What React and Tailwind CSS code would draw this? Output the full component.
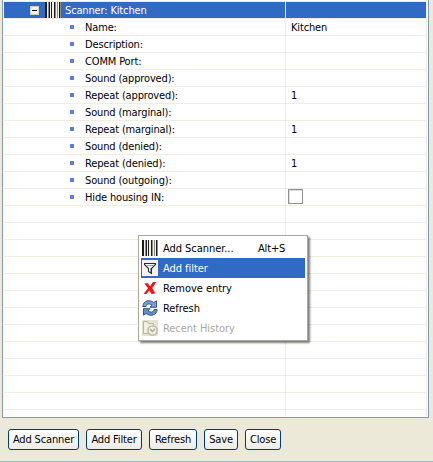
import React from "react";

const rows = [
  ["Name:", "Kitchen"],
  ["Description:", ""],
  ["COMM Port:", ""],
  ["Sound (approved):", ""],
  ["Repeat (approved):", "1"],
  ["Sound (marginal):", ""],
  ["Repeat (marginal):", "1"],
  ["Sound (denied):", ""],
  ["Repeat (denied):", "1"],
  ["Sound (outgoing):", ""],
  ["Hide housing IN:", "checkbox"],
];
const blanks = Array.from({ length: 12 }, (_, i) => i);

function Barcode() {
  return (
    <svg className="h-4 w-4 shrink-0" viewBox="0 0 16 16" shapeRendering="crispEdges">
      <path fill="#f4f1e6" d="M0 0h16v16H0z" />
      <path fill="#1c1c1c" d="M0 0h2v16H0zM4 0h1v16H4zM6 0h1v16H6zM9 0h1v16H9zM14 0h1v16h-1z" />
      <path fill="#8c8c86" d="M3 0h1v16H3zM10 0h1v16h-1zM12 0h1v16h-1zM15 0h1v16h-1z" />
    </svg>
  );
}

function Funnel() {
  return (
    <svg className="h-4 w-4 shrink-0" viewBox="0 0 16 16">
      <path fill="#f6f4ec" d="M0 0h16v16H0z" />
      <path fill="#fff" stroke="#222b3c" strokeWidth="1.1" d="M2.500 3.500h11v1L9.500 8.500v5l-3-2v-3l-4-4z" />
      <path fill="#8ba0b8" d="M8 8h1v4H8zM5 5h6v1H5z" />
    </svg>
  );
}

function Cross() {
  return (
    <svg className="h-4 w-4 shrink-0" viewBox="0 0 16 16">
      <path fill="#f01414" d="M2.500 3.500L5.500 3 8 6.300 11 2h3L9.800 8l3 5.500-3.300.5L7.400 10.300 4.500 14H1.500L6 8.200z" />
      <path fill="none" stroke="#c00808" strokeWidth=".8" d="M13.500 2.200L9.800 8l3 5.300" />
    </svg>
  );
}

function RefreshIcon() {
  return (
    <svg className="h-4 w-4 shrink-0" viewBox="0 0 16 16">
      <path fill="#7ba0cf" stroke="#234a86" strokeWidth=".9" d="M.8 6.500C1 .5 8-.8 11.800 2.500L14.500.8v6.500H8l2-2.200C7.500 3.300 4.800 3.500 4 6.500z" />
      <path fill="#6890c8" stroke="#234a86" strokeWidth=".9" d="M15.200 9.500C15 15.500 8 16.800 4.200 13.500L1.500 15.200V8.700H8l-2 2.200c2.500 1.800 5.200 1.600 6-1.400z" />
    </svg>
  );
}

function HistoryIcon() {
  return (
    <svg className="h-4 w-4 shrink-0" viewBox="0 0 16 16" fill="none" stroke="#b9b5a4">
      <path fill="#e6e2d0" stroke="none" d="M0 0h16v16H0z" />
      <path fill="#f1eee2" d="M1.500 1.500h4l1 2h5v10h-10z" />
      <circle cx="10.500" cy="10.500" r="4.600" fill="#f1eee2" strokeWidth="1.400" />
      <path stroke="#aca899" strokeWidth="1.400" d="M8 9l2.500 2.500L13 9" />
    </svg>
  );
}

function MenuItem({ icon, label, hint, active, disabled }) {
  return (
    <div className={"flex h-5 items-center pl-px " + (active ? "bg-[#316ac5] text-white" : disabled ? "text-[#aca899]" : "text-black")}>
      {icon}
      <span className="ml-[5px] w-[95px] shrink-0 pt-px tracking-[-0.05px]">{label}</span>
      <span className="pt-px">{hint}</span>
    </div>
  );
}

function Button({ children, size }) {
  return (
    <button className={"flex h-[21px] items-center justify-center rounded-[3px] border border-[#003c74] bg-linear-to-b from-white to-[#ecebe5] pt-px " + size}>
      {children}
    </button>
  );
}

export default function App() {
  return (
    <div className="relative flex h-[462px] w-[433px] flex-col overflow-hidden border-b border-[#9db5e8] bg-[#ece9d8] font-['DejaVu_Sans_Condensed','DejaVu_Sans',sans-serif] text-[11px] leading-4 tracking-[-0.15px] whitespace-nowrap text-black">
      <div className="ml-[2px] h-[418px] w-[427px] shrink-0 border-x border-b border-[#7f9db9] bg-white pr-px pl-px">
        <div className="h-[2px] border-r border-b border-[#efeddf]" />
        <div className="flex h-[17px] border-r border-b border-[#efeddf] text-white">
          <div className="flex w-[282px] items-center border-r border-[#efeddf] bg-[#316ac5] pl-[26px]">
            <div className="flex h-[9px] w-[9px] items-center justify-center border border-[#d5d0bc] bg-[#f3f1e9]">
              <div className="h-px w-[5px] bg-black" />
            </div>
            <div className="ml-[6px] flex"><Barcode /></div>
            <span className="ml-1 pt-[2px]">Scanner: Kitchen</span>
          </div>
          <div className="flex-1 bg-[#316ac5]" />
        </div>
        {rows.map(([label, value]) => (
          <div key={label} className="flex h-[17px] border-r border-b border-[#efeddf]">
            <div className="flex w-[282px] items-center border-r border-[#efeddf] pl-[66px]">
              <div className="h-1 w-1 bg-[#5a7edc]" />
              <span className="ml-[11px] pt-[2px]">{label}</span>
            </div>
            {value === "checkbox" ? (
              <div className="ml-[2px] h-[15px] w-[15px] border border-[#8e8f8f] bg-white shadow-[inset_1px_1px_0_#ddd]" />
            ) : (
              <span className="ml-[5px] pt-px">{value}</span>
            )}
          </div>
        ))}
        {blanks.map((i) => (
          <div key={i} className="h-[17px] border-r border-b border-[#efeddf]">
            <div className="h-full w-[282px] border-r border-[#efeddf]" />
          </div>
        ))}
        <div className="h-[6px] border-r border-[#efeddf]">
          <div className="h-full w-[282px] border-r border-[#efeddf]" />
        </div>
      </div>

      <div className="mt-[11px] ml-2 flex">
        <Button size="w-[71px]">Add Scanner</Button>
        <Button size="ml-[7px] w-[56px]">Add Filter</Button>
        <Button size="ml-[7px] w-[48px]">Refresh</Button>
        <Button size="ml-[7px] w-[34px]">Save</Button>
        <Button size="ml-[7px] w-[36px]">Close</Button>
      </div>

      <div className="absolute top-[235px] left-[138px] h-[106px] w-[170px] border border-[#aca899] bg-white p-[2px] shadow-[2px_2px_2px_rgba(0,0,0,0.5)]">
        <MenuItem icon={<Barcode />} label="Add Scanner..." hint="Alt+S" />
        <MenuItem icon={<Funnel />} label="Add filter" active />
        <MenuItem icon={<Cross />} label="Remove entry" />
        <MenuItem icon={<RefreshIcon />} label="Refresh" />
        <MenuItem icon={<HistoryIcon />} label="Recent History" disabled />
      </div>
    </div>
  );
}
